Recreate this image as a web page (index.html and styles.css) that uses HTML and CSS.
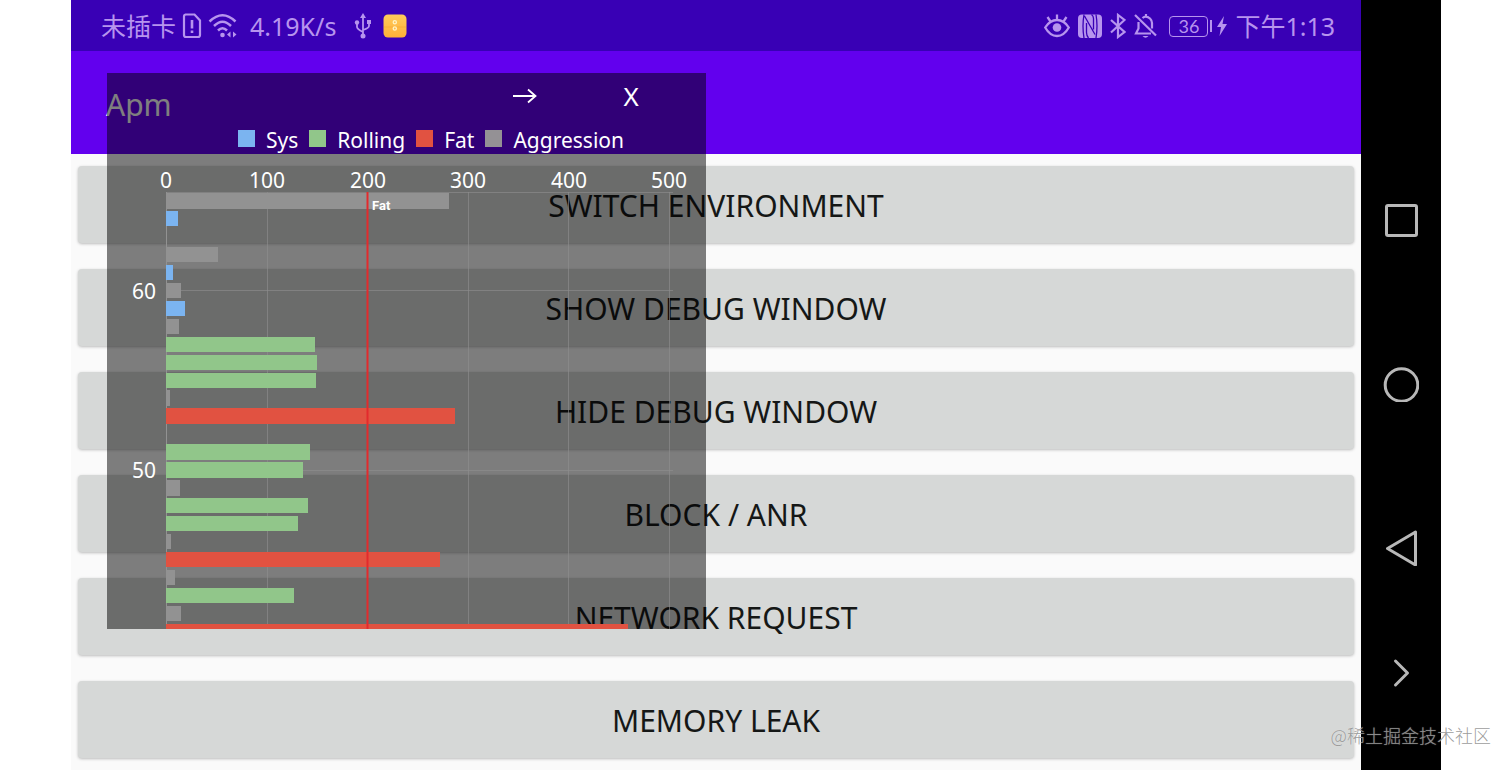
FILE: index.html
```html
<!DOCTYPE html>
<html lang="zh-CN">
<head>
<meta charset="utf-8">
<title>Apm</title>
<link rel="stylesheet" href="styles.css">
</head>
<body>
<div class="device">
  <main class="screen">
    <div class="status">
      <div class="status-left">
        <span class="status-text">未插卡</span>
        <svg class="sim" width="20" height="26" viewBox="0 0 20 26" fill="none" stroke="currentColor" stroke-width="2.200"><path d="M3 1.500h9.500l5.500 6V22q0 2-2 2H4q-2 0-2-2V3.500q0-2 2-2z"/><path d="M10 7v8.500M10 17.500V20" stroke-width="2.600"/></svg>
        <svg class="wifi" width="30" height="26" viewBox="0 0 30 26" fill="none" stroke="currentColor" stroke-width="2.500"><path d="M1.500 8.500Q14.500-4 27.500 8.500M6 13q8.500-8.500 17 0M10 17.500q4.500-4.500 9 0"/><circle cx="14.500" cy="22" r="2.300" fill="currentColor" stroke="none"/><path d="M22.500 18.500v6l-3.500-3zM25 18.500v6l3.500-3z" fill="currentColor" stroke="none"/></svg>
        <span class="status-text speed">4.19K/s</span>
        <svg class="usb" width="18" height="26" viewBox="0 0 18 26" fill="none" stroke="currentColor" stroke-width="1.800"><path d="M9 3v20M3 10v4q0 2 6 5M15 10v3q0 2-6 4"/><path d="M9 0l3 5H6z" fill="currentColor" stroke="none"/><circle cx="3" cy="9.500" r="2.200" fill="currentColor" stroke="none"/><path d="M13 7h4v4h-4z" fill="currentColor" stroke="none"/><circle cx="9" cy="23" r="2.500" fill="currentColor" stroke="none"/></svg>
        <svg width="24" height="24" viewBox="0 0 24 24"><defs><linearGradient id="gold" x1="0" y1="0" x2="0" y2="1"><stop offset="0" stop-color="#ffca5b"/><stop offset="1" stop-color="#ffb038"/></linearGradient></defs><rect x=".5" y=".5" width="23" height="23" rx="4.500" fill="url(#gold)"/><path d="M1 13h22" stroke="#f5a92f" stroke-width=".6"/><g fill="none" stroke="#fff3c5" stroke-width="1.300"><circle cx="11.800" cy="8.300" r="1.600"/><circle cx="11.800" cy="14.500" r="1.600"/></g></svg>
      </div>
      <div class="status-right">
        <svg width="26" height="26" viewBox="0 0 26 26" fill="none" stroke="currentColor" stroke-width="2.300"><path d="M1.200 14.500Q6 7 13 7t11.800 7.500Q20 23 13 23T1.200 14.500zM13 7V1.500M6.500 8.500l-3-4.500M19.500 8.500l3-4.500"/><circle cx="13" cy="14.500" r="4.300" fill="currentColor" stroke="none"/></svg>
        <svg width="24" height="26" viewBox="0 0 24 26"><rect x="0" y="1.500" width="24" height="23.500" rx="4" fill="currentColor"/><path d="M6 1.500Q4 13 6 25M6.500 3l10.500 18.500M8.500 10v9.500q0 3 2 5.500M13.500 1.500q2 1.500 2 4v11M18 1.500Q20 13 18 25" fill="none" stroke="#3900b5" stroke-width="1.300"/></svg>
        <svg width="16" height="26" viewBox="0 0 16 26" fill="none" stroke="currentColor" stroke-width="2.200"><path d="M1 7l13.500 12L8 24v-22L14.500 7 1 19.500"/></svg>
        <svg width="23" height="26" viewBox="0 0 23 26" fill="none" stroke="currentColor" stroke-width="2.200"><path d="M1 2l21 20.500M4.500 9v6.500L2 20.500h15M8.500 5Q12 2 16 5.500q2 2 2 4.500v5.500M12 4V1"/><path d="M8.500 23h6q-3 3.500-6 0z" fill="currentColor" stroke="none"/></svg>
        <span class="battery"><span class="battery-level">36</span></span>
        <svg class="bolt" width="10" height="20" viewBox="0 0 10 20"><path d="M7 0L0 11h4L2.500 20 10 8H5.500z" fill="currentColor"/></svg>
        <time class="status-text">下午1:13</time>
      </div>
    </div>
    <header class="appbar"><h1 class="title">Apm</h1></header>
    <div class="actions">
      <button class="action" type="button">SWITCH ENVIRONMENT</button>
      <button class="action" type="button">SHOW DEBUG WINDOW</button>
      <button class="action" type="button">HIDE DEBUG WINDOW</button>
      <button class="action" type="button">BLOCK / ANR</button>
      <button class="action" type="button">NETWORK REQUEST</button>
      <button class="action" type="button">MEMORY LEAK</button>
    </div>
    <section class="debug" aria-label="Debug window">
      <div class="debug-head">
        <button class="debug-btn" type="button" aria-label="Next"><svg width="24" height="16" viewBox="0 0 24 16" fill="none" stroke="currentColor" stroke-width="1.800"><path d="M0 8h22M15 1.500L22.500 8 15 14.500"/></svg></button>
        <button class="debug-btn" type="button">X</button>
      </div>
      <ul class="legend">
        <li class="key"><i class="swatch sys"></i>Sys</li>
        <li class="key"><i class="swatch rolling"></i>Rolling</li>
        <li class="key"><i class="swatch fat"></i>Fat</li>
        <li class="key"><i class="swatch aggression"></i>Aggression</li>
      </ul>
      <svg class="chart" viewBox="0 0 599 475">
        <path class="grid" d="M59 38.500H566M59 136.500H566M59 316.500H566M160.500 38v437M361.500 38v437M461.500 38v437M562.500 38v437"/>
        <path class="axis" d="M59.500 38v437"/>
        <g class="bar-aggression">
          <rect x="59" y="39" width="283" height="16"/><rect x="59" y="93" width="52" height="15"/><rect x="59" y="129" width="15" height="15"/><rect x="59" y="165" width="13" height="15"/><rect x="59" y="236" width="4" height="16"/><rect x="59" y="326" width="14" height="16"/><rect x="59" y="380" width="5" height="15"/><rect x="59" y="416" width="9" height="15"/><rect x="59" y="452" width="15" height="15"/>
        </g>
        <g class="bar-sys">
          <rect x="59" y="57" width="12" height="15"/><rect x="59" y="111" width="7" height="15"/><rect x="59" y="147" width="19" height="15"/>
        </g>
        <g class="bar-rolling">
          <rect x="59" y="183" width="149" height="15"/><rect x="59" y="201" width="151" height="15"/><rect x="59" y="219" width="150" height="15"/><rect x="59" y="290" width="144" height="16"/><rect x="59" y="308" width="137" height="16"/><rect x="59" y="344" width="142" height="15"/><rect x="59" y="362" width="132" height="15"/><rect x="59" y="434" width="128" height="15"/>
        </g>
        <g class="bar-fat">
          <rect x="59" y="254" width="289" height="16"/><rect x="59" y="398" width="274" height="15"/><rect x="59" y="470" width="462" height="5"/>
        </g>
        <path class="limit" d="M260.500 38v437"/>
        <g class="tick">
          <text x="59" y="34">0</text><text x="160" y="34">100</text><text x="261" y="34">200</text><text x="361" y="34">300</text><text x="462" y="34">400</text><text x="562" y="34">500</text>
        </g>
        <g class="tick tick-y"><text x="49" y="145">60</text><text x="49" y="324">50</text></g>
        <text class="limit-label" x="265" y="56">Fat</text>
      </svg>
    </section>
  </main>
  <nav class="nav" aria-label="System navigation">
    <div class="nav-main">
      <button class="nav-btn" type="button" aria-label="Recent"><svg width="36" height="36" viewBox="0 0 36 36"><rect x="3.500" y="3.500" width="30" height="30" rx="1.500"/></svg></button>
      <button class="nav-btn" type="button" aria-label="Home"><svg width="36" height="36" viewBox="0 0 36 36"><circle cx="18.500" cy="19" r="16.300"/></svg></button>
      <button class="nav-btn" type="button" aria-label="Back"><svg width="36" height="36" viewBox="0 0 36 36"><path d="M32.500 2v33L4.500 18.500z"/></svg></button>
    </div>
    <button class="nav-btn" type="button" aria-label="Hide"><svg width="36" height="36" viewBox="0 0 36 36"><path d="M12.500 6l12 12L12.500 30"/></svg></button>
  </nav>
  <span class="watermark">@稀土掘金技术社区</span>
</div>
</body>
</html>
```
FILE: styles.css
```css
* { box-sizing: border-box; }
body { margin: 0; background: #fff; font-family: "Noto Sans", "Noto Sans CJK SC", sans-serif; }
button { border: 0; padding: 0; background: none; font: inherit; color: inherit; }
svg { display: block; flex: none; }

.device { position: relative; display: flex; min-height: 100vh; padding: 0 71px; }
.screen { position: relative; flex: 1; background: #fafafa; }

.status { display: flex; justify-content: space-between; height: 51px; padding: 1px 26px 0 30px; background: #3900b5; color: #b794ee; white-space: nowrap; }
.status-left, .status-right { display: flex; align-items: center; }
.status-text { font-size: 25px; line-height: 36px; }
.sim { margin-left: 6px; }
.wifi { margin-left: 6px; }
.speed { margin-left: 12px; }
.usb { margin: 0 11px 0 18px; }
.status-right { gap: 8px; }
.battery { position: relative; width: 43px; height: 21px; padding-right: 4px; margin-left: 4px; }
.battery::after { content: ""; position: absolute; right: 0; top: 4px; width: 2px; height: 12px; background: currentColor; }
.battery-level { display: block; height: 21px; border: 1px solid currentColor; border-radius: 4px; font: 18px/19px Lato, sans-serif; text-align: center; }
.bolt { margin-left: -3px; }

.appbar { display: flex; align-items: center; height: 103px; padding: 4px 35px 0; background: #6200ee; color: #fff; }
.title { margin: 0; font-size: 30px; line-height: 40px; font-weight: 400; }
.actions { display: flex; flex-direction: column; gap: 26px; padding: 12px 7px; }
.action { height: 77px; padding-top: 2px; border-radius: 4px; background: #d6d8d7; box-shadow: 0 1px 3px rgba(0, 0, 0, .25); color: #151716; font-size: 30px; line-height: 40px; }

.debug { position: absolute; left: 36px; top: 73px; width: 599px; background: rgba(0, 0, 0, .5); color: #fff; }
.debug-head { display: flex; justify-content: flex-end; gap: 76px; height: 46px; padding-right: 60px; }
.debug-btn { display: grid; place-items: center; width: 30px; height: 46px; font-size: 26px; line-height: 44px; }
.legend { display: flex; justify-content: center; gap: 11px; height: 35px; margin: 0; padding: 7px 0 0 49px; list-style: none; font-size: 21px; line-height: 28px; }
.key { display: flex; gap: 11px; }
.swatch { width: 17px; height: 17px; margin-top: 4px; }
.sys { background: #7bb4f0; }
.rolling { background: #91c68a; }
.fat { background: #e15241; }
.aggression { background: #949195; }
.chart { width: 100%; height: auto; }
.grid { stroke: #909090; stroke-opacity: .6; fill: none; }
.axis { stroke: #929292; }
.bar-aggression { fill: #929292; }
.bar-sys { fill: #7bb4f0; }
.bar-rolling { fill: #91c68a; }
.bar-fat { fill: #e15241; }
.limit { stroke: #e32a2d; stroke-width: 2; }
.tick { fill: #fff; font-size: 21px; text-anchor: middle; }
.tick-y { text-anchor: end; }
.limit-label { fill: #fff; font: 700 13px Roboto, sans-serif; }

.nav { display: flex; flex-direction: column; align-items: center; gap: 89px; width: 80px; padding-top: 202px; background: #000; }
.nav-main { display: flex; flex-direction: column; gap: 128px; }
.nav-btn { width: 36px; height: 36px; }
.nav-btn svg { fill: none; stroke: #b8b8b8; stroke-width: 3; stroke-linejoin: round; stroke-linecap: round; }
.watermark { position: absolute; right: 21px; bottom: 21px; color: rgba(145, 145, 145, .9); font: 300 18px/27px "Noto Sans CJK SC", sans-serif; text-shadow: 0 0 1px rgba(255, 255, 255, .5); }
```
